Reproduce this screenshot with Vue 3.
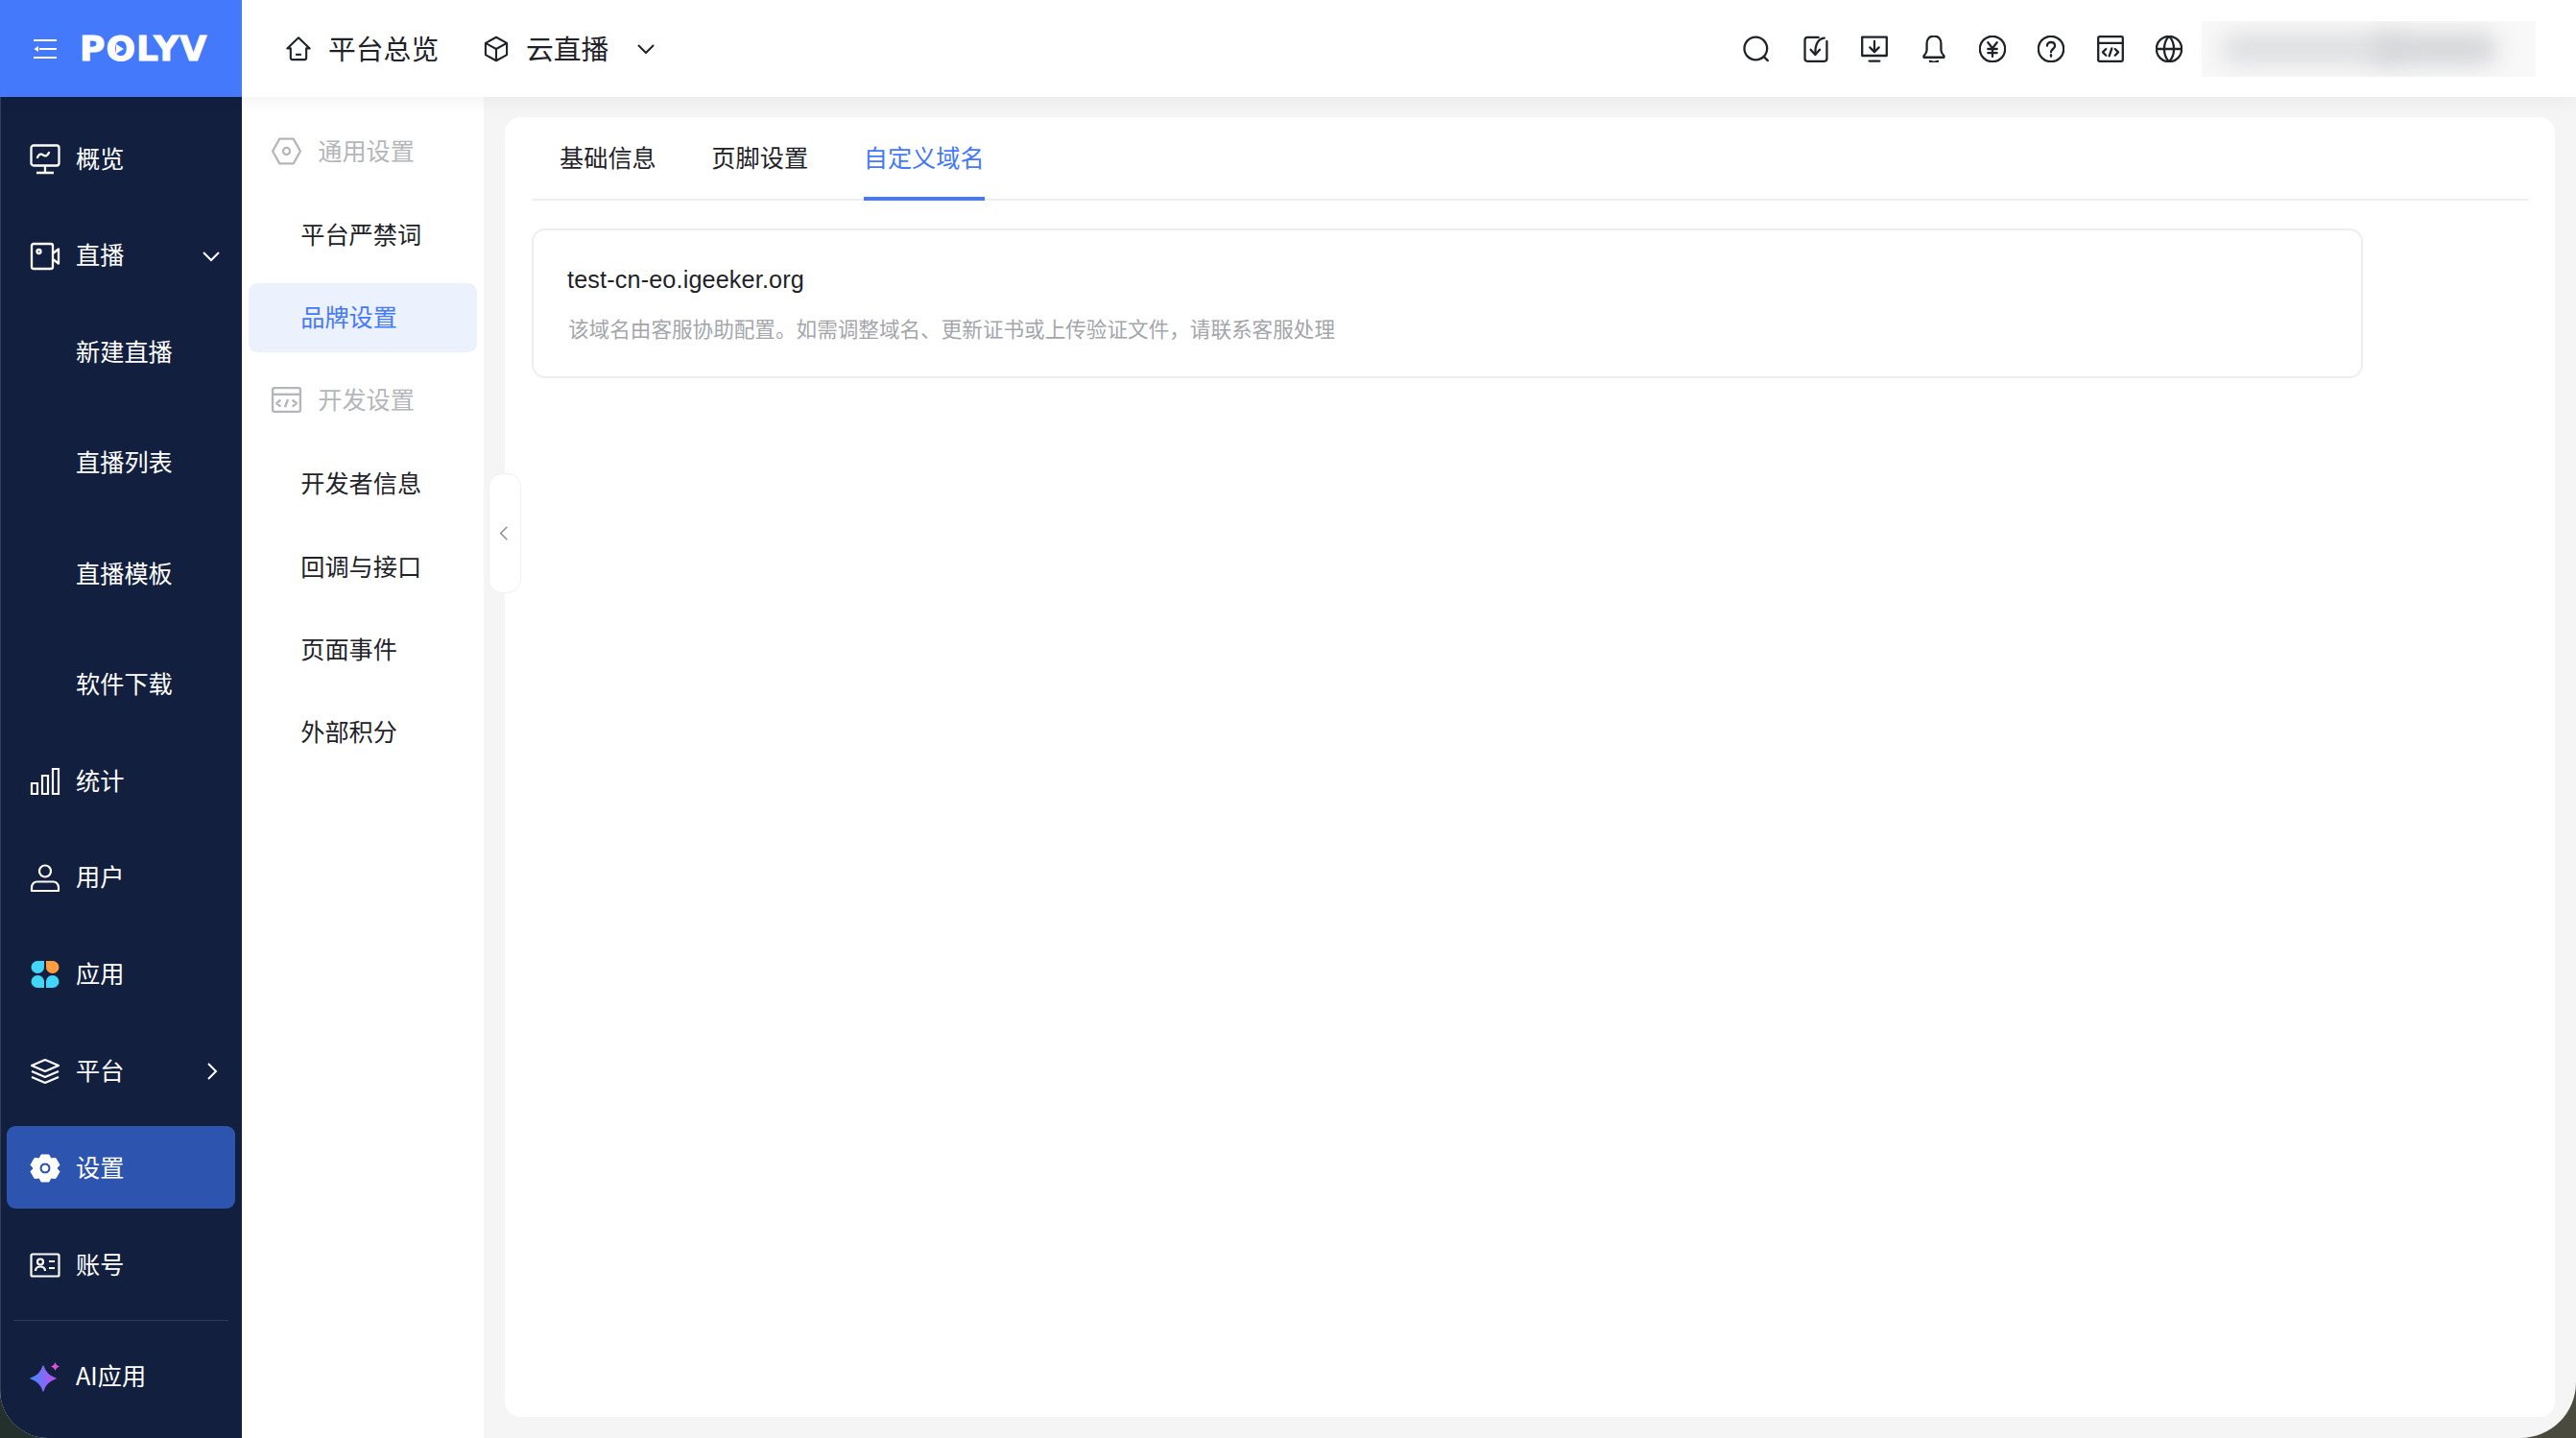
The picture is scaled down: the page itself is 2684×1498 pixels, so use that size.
<script setup>
const topIcons = [
  { k: 'search', d: ['M11.500 2.800a8.800 8.800 0 1 0 0 17.600 8.800 8.800 0 0 0 0-17.600Z', 'M18 18.200 20.800 21'] },
  { k: 'ret', d: ['M14 3H5.500a2 2 0 0 0-2 2v14.500a2 2 0 0 0 2 2h13a2 2 0 0 0 2-2V6', 'M18.500 3.500C14 4 11.500 8 11.500 15.500', 'M8 12.500 11.500 16.500l3.500-4'] },
  { k: 'down', d: ['M2.500 2.800h19v14.400h-19Z', 'M12 6v8', 'M8.500 10.800 12 14.300l3.500-3.500', 'M8 21.300h8'] },
  { k: 'bell', d: ['M12 2c-3.500 0-5.500 2.600-5.500 6v5c0 2-1 3-2.300 4.400v1.100h15.600v-1.100c-1.300-1.400-2.300-2.400-2.300-4.400V8c0-3.400-2-6-5.500-6Z', 'M9 21.500c1.500 1 4.500 1 6 0'] },
  { k: 'yen', d: ['M12 2.200a9.800 9.800 0 1 0 0 19.600 9.800 9.800 0 0 0 0-19.600Z', 'M8.500 7 12 11.500 15.500 7', 'M8.500 12h7', 'M8.500 15h7', 'M12 11.500V18'] },
  { k: 'help', d: ['M12 2.200a9.800 9.800 0 1 0 0 19.600 9.800 9.800 0 0 0 0-19.600Z', 'M9 9.500C9 7.800 10.300 6.800 12 6.800s3 1 3 2.700c0 2.500-3 2.500-3 5', 'M12 16.600v1.200'] },
  { k: 'code', d: ['M3.500 2.500h17a1 1 0 0 1 1 1v17a1 1 0 0 1-1 1h-17a1 1 0 0 1-1-1v-17a1 1 0 0 1 1-1Z', 'M2.500 7.500h19', 'M8.500 12 6 14.500 8.500 17', 'M15.500 12 18 14.500 15.500 17', 'M13 11.500 11 17.500'] },
  { k: 'globe', d: ['M12 2.200a9.800 9.800 0 1 0 0 19.600 9.800 9.800 0 0 0 0-19.600Z', 'M12 2.200c-5 5-5 14.600 0 19.600', 'M12 2.200c5 5 5 14.600 0 19.600', 'M2.200 12h19.600'] },
]
const subNav = [
  { label: '通用设置', group: 'gear' },
  { label: '平台严禁词' },
  { label: '品牌设置', active: true },
  { label: '开发设置', group: 'code' },
  { label: '开发者信息' },
  { label: '回调与接口' },
  { label: '页面事件' },
  { label: '外部积分' },
]
const tabs = [
  { label: '基础信息' },
  { label: '页脚设置' },
  { label: '自定义域名', active: true },
]
const hint = '该域名由客服协助配置。如需调整域名、更新证书或上传验证文件\uFF0C请联系客服处理'
</script>

<template>
  <div class="screen">
    <div class="window">
      <header class="topbar">
        <div class="brand">
          <svg class="burger" viewBox="0 0 24 20" fill="none" stroke="#fff" stroke-width="2">
            <path d="M0 1h24M6 10h18M0 19h24" />
            <path d="M0.500 10 5 7v6Z" fill="#fff" stroke="none" />
          </svg>
          <span class="logo">POLYV<svg class="play" viewBox="0 0 8 10"><path d="M0 0l8 5-8 5Z" fill="#fff" /></svg></span>
        </div>
        <nav class="crumbs">
          <div class="crumb home">
            <svg class="crumb-icon" viewBox="0 0 24 24" fill="none" stroke="#1f2329" stroke-width="1.800" stroke-linejoin="round">
              <path d="M12 2 2 11.500H5v8.500a1.500 1.500 0 0 0 1.500 1.500h11a1.500 1.500 0 0 0 1.500-1.500v-8.500h3Z" />
              <path d="M9.500 17h5" />
            </svg>
            <span>平台总览</span>
          </div>
          <div class="crumb product">
            <svg class="crumb-icon" viewBox="0 0 24 24" fill="none" stroke="#1f2329" stroke-width="1.800" stroke-linejoin="round">
              <path d="M12 1.500 21.500 6.800v10.400L12 22.500 2.500 17.200V6.800Z" />
              <path d="M2.500 6.800 12 12l9.500-5.200M12 12v10.500" />
            </svg>
            <span>云直播</span>
            <svg class="crumb-chevron" viewBox="0 0 20 12" fill="none" stroke="#1f2329" stroke-width="2">
              <path d="M2 2l8 8 8-8" />
            </svg>
          </div>
        </nav>
        <div class="tools">
          <svg v-for="icon in topIcons" :key="icon.k" class="tool" viewBox="1.600 1.600 20.800 20.800" fill="none" stroke="#1f2329" stroke-width="1.700" stroke-linecap="round" stroke-linejoin="round">
            <path v-for="(p, i) in icon.d" :key="i" :d="p" />
          </svg>
          <div class="account">
            <span class="blob blob-a"></span>
            <span class="blob blob-b"></span>
          </div>
        </div>
      </header>

      <div class="body">
        <aside class="sidebar">
          <a class="item">
            <svg class="ico" viewBox="0 0 32 32" fill="none" stroke="#fff" stroke-width="2.300" stroke-linejoin="round">
              <rect x="1.500" y="1.500" width="29" height="21" rx="2.500" /><path d="M16 23v7M7 30h18" /><path d="M8 14c2-4 4-4 6-2.500s4 1.500 6-2.500" stroke-linecap="round" />
            </svg>
            <span>概览</span>
          </a>
          <a class="item">
            <svg class="ico" viewBox="0 0 32 32" fill="none" stroke="#fff" stroke-width="2.300" stroke-linejoin="round">
              <path d="M4 3h18a2 2 0 0 1 2 2v22a2 2 0 0 1-2 2H4a2 2 0 0 1-2-2V5a2 2 0 0 1 2-2Z" />
              <path d="M24 13l6-4.500v15L24 19" /><circle cx="9.500" cy="11" r="2" />
            </svg>
            <span>直播</span>
            <svg class="caret" viewBox="0 0 20 12" fill="none" stroke="#fff" stroke-width="2"><path d="M2 2l8 8 8-8" /></svg>
          </a>
          <div class="sublist">
            <a class="item">新建直播</a>
            <a class="item">直播列表</a>
            <a class="item">直播模板</a>
            <a class="item">软件下载</a>
          </div>
          <a class="item">
            <svg class="ico" viewBox="0 0 32 32" fill="none" stroke="#fff" stroke-width="2.200">
              <path d="M2 18h6v11H2ZM13 10h6v19h-6ZM24 3h6v26h-6Z" />
            </svg>
            <span>统计</span>
          </a>
          <a class="item">
            <svg class="ico" viewBox="0 0 32 32" fill="none" stroke="#fff" stroke-width="2.200" stroke-linejoin="round">
              <circle cx="16" cy="8.500" r="6" /><path d="M2 29v-3.500c0-3.500 2.500-6 5.500-6h17c3 0 5.500 2.500 5.500 6V29Z" />
            </svg>
            <span>用户</span>
          </a>
          <a class="item">
            <svg class="ico" viewBox="0 0 32 32">
              <path d="M8 2h7v6a6.500 6.500 0 0 1-7 7 6.500 6.500 0 0 1 0-13Z" fill="#41d5f7" />
              <path d="M24 2h-7v6a6.500 6.500 0 0 0 7 7 6.500 6.500 0 0 0 0-13Z" fill="#ff9c3d" />
              <path d="M8 30h7v-6a6.500 6.500 0 0 0-7-7 6.500 6.500 0 0 0 0 13Z" fill="#41d5f7" />
              <path d="M24 30h-7v-6a6.500 6.500 0 0 1 7-7 6.500 6.500 0 0 1 0 13Z" fill="#41d5f7" />
            </svg>
            <span>应用</span>
          </a>
          <a class="item">
            <svg class="ico" viewBox="0 0 32 32" fill="none" stroke="#fff" stroke-width="2.200" stroke-linejoin="round">
              <path d="M16 4 30 10 16 16 2 10Z" /><path d="M2 16l14 6 14-6" /><path d="M2 22l14 6 14-6" />
            </svg>
            <span>平台</span>
            <svg class="caret side" viewBox="0 0 12 20" fill="none" stroke="#fff" stroke-width="2"><path d="M2 2l8 8-8 8" /></svg>
          </a>
          <a class="item current">
            <svg class="ico" viewBox="0 0 32 32">
              <path fill="#fff" fill-rule="evenodd" d="M12 2h8l2 4 5-.5 4 7-3 3.500 3 3.500-4 7-5-.5-2 4h-8l-2-4-5 .5-4-7 3-3.500-3-3.500 4-7 5 .5ZM16 10a6 6 0 1 0 0 12 6 6 0 0 0 0-12Zm0 3a3 3 0 1 1 0 6 3 3 0 0 1 0-6Z" stroke="#fff" stroke-width="1" stroke-linejoin="round" />
            </svg>
            <span>设置</span>
          </a>
          <a class="item">
            <svg class="ico" viewBox="0 0 32 32" fill="none" stroke="#fff" stroke-width="2.200" stroke-linejoin="round">
              <rect x="1.500" y="4.500" width="29" height="23" rx="1.500" /><circle cx="11" cy="12.500" r="3" /><path d="M6 22c0-6 10-6 10 0" /><path d="M20 12h6M20 19h6" />
            </svg>
            <span>账号</span>
          </a>
          <div class="rule"></div>
          <a class="item">
            <svg class="ico" viewBox="0 0 32 32">
              <defs>
                <linearGradient id="aiStar" x1="0" y1="0.500" x2="1" y2="0.500">
                  <stop offset="0" stop-color="#3f8cff" /><stop offset="1" stop-color="#c04df0" />
                </linearGradient>
              </defs>
              <path d="M14 5Q17 15 27 18 17 21 14 31 11 21 1 18 11 15 14 5Z" fill="url(#aiStar)" stroke="url(#aiStar)" stroke-width="1.200" stroke-linejoin="round" />
              <path d="M26.500 1Q27.500 4.500 31 5.500 27.500 6.500 26.500 10 25.500 6.500 22 5.500 25.500 4.500 26.500 1Z" fill="#e04fd8" />
            </svg>
            <span class="ai">AI应用</span>
          </a>
        </aside>

        <nav class="subnav">
          <template v-for="row in subNav" :key="row.label">
            <div v-if="row.group" class="group">
              <svg v-if="row.group === 'gear'" class="group-ico" viewBox="0 0 32 32" fill="none" stroke="#b4b6ba" stroke-width="2.200" stroke-linejoin="round">
                <path d="M9 3.500h14l7 12.500-7 12.500H9L2 16Z" /><circle cx="16" cy="16" r="3.500" />
              </svg>
              <svg v-else class="group-ico" viewBox="0 0 32 32" fill="none" stroke="#b4b6ba" stroke-width="2.300" stroke-linejoin="round">
                <rect x="2" y="4" width="28" height="24" rx="2" /><path d="M2 10.500h28" /><path d="M10 16l-4 3.500L10 23M22 16l4 3.500L22 23M17.500 15.500l-3 8" />
              </svg>
              <span>{{ row.label }}</span>
            </div>
            <a v-else class="leaf" :class="{ on: row.active }">{{ row.label }}</a>
          </template>
          <button class="collapse" type="button" aria-label="收起">
            <svg viewBox="0 0 12 20" fill="none" stroke="#8a8d92" stroke-width="1.800"><path d="M10 2 2 10l8 8" /></svg>
          </button>
        </nav>

        <main class="main">
          <section class="panel">
            <div class="tabs">
              <a v-for="t in tabs" :key="t.label" class="tab" :class="{ on: t.active }">{{ t.label }}</a>
            </div>
            <div class="card">
              <div class="domain">test-cn-eo.igeeker.org</div>
              <div class="hint">{{ hint }}</div>
            </div>
          </section>
        </main>
      </div>
    </div>
  </div>
</template>

<style>
html, body { margin: 0; padding: 0; background: #2a332e; }
</style>

<style scoped>
.screen {
  width: 2684px;
  height: 1498px;
  overflow: hidden;
  background: linear-gradient(90deg, #24302c 0, #24302c 50%, #4a4a3e 50%, #4a4a3e 100%);
  font-family: "Noto Sans CJK SC", "Noto Sans", sans-serif;
}
.window {
  width: 100%;
  height: 100%;
  display: flex;
  flex-direction: column;
  background: #f5f5f5;
  border-radius: 0 0 58px 50px;
  overflow: hidden;
}
.topbar {
  position: relative;
  z-index: 3;
  flex: none;
  height: 101px;
  display: flex;
  align-items: center;
  background: #fff;
  box-shadow: 0 4px 18px rgba(0, 0, 0, 0.05);
}
.brand {
  width: 252px;
  height: 100%;
  flex: none;
  display: flex;
  align-items: center;
  gap: 24px;
  padding-left: 35px;
  box-sizing: border-box;
  background: #4479fb;
}
.burger { width: 24px; height: 20px; flex: none; overflow: visible; }
.logo {
  position: relative;
  color: #fff;
  font-family: "DejaVu Sans", sans-serif;
  font-weight: 700;
  font-size: 36px;
  letter-spacing: 1px;
  line-height: 1;
  -webkit-text-stroke: 1px #fff;
}
.play { position: absolute; left: 38px; top: 13px; width: 8px; height: 10px; }
.crumbs { display: flex; align-items: center; padding-left: 45px; }
.crumb {
  display: flex;
  align-items: center;
  font-size: 28.800px;
  color: #1f2329;
  white-space: nowrap;
}
.crumb span { margin-top: -3px; }
.crumb-icon { width: 28px; height: 28px; flex: none; margin-right: 17px; }
.home { width: 206px; }
.crumb-chevron { width: 20px; height: 12px; margin-left: 29px; }
.tools {
  margin-left: auto;
  display: flex;
  align-items: center;
  gap: 33.400px;
  padding-right: 42px;
}
.tool { width: 28px; height: 28px; flex: none; }
.account {
  position: relative;
  width: 348px;
  height: 58px;
  margin-left: -13.500px;
  background: #f8f8f8;
  overflow: hidden;
}
.blob { position: absolute; top: 12px; height: 34px; border-radius: 17px; filter: blur(11px); }
.blob-a { left: 20px; width: 190px; background: #dfe0e2; }
.blob-b { left: 178px; width: 130px; background: #d6d7da; }

.body { flex: 1; min-height: 0; display: flex; }

.sidebar {
  width: 252px;
  flex: none;
  box-sizing: border-box;
  padding-top: 21px;
  display: flex;
  flex-direction: column;
  gap: 14.400px;
  background: #121f3f;
  box-shadow: inset 1px 0 0 rgba(255, 255, 255, 0.14);
}
.item {
  position: relative;
  height: 86.400px;
  flex: none;
  box-sizing: border-box;
  margin: 0 7px;
  padding: 0 0 3px 72px;
  display: flex;
  align-items: center;
  border-radius: 9px;
  color: #fff;
  font-size: 25.200px;
  white-space: nowrap;
}
.current { background: #2d55b0; }
.ico { position: absolute; left: 24px; top: 28px; width: 32px; height: 32px; overflow: visible; }
.caret { position: absolute; right: 15px; top: 38px; width: 20px; height: 12px; }
.caret.side { right: 18px; top: 34px; width: 12px; height: 20px; }
.sublist { display: flex; flex-direction: column; gap: 28.800px; }
.rule { height: 1px; flex: none; margin: 0 14px; background: rgba(255, 255, 255, 0.12); }

.subnav {
  position: relative;
  width: 252px;
  flex: none;
  box-sizing: border-box;
  padding: 21.600px 7.200px 0;
  display: flex;
  flex-direction: column;
  gap: 14.400px;
  background: #fff;
}
.group, .leaf {
  height: 72px;
  flex: none;
  box-sizing: border-box;
  display: flex;
  align-items: center;
  font-size: 25.200px;
  white-space: nowrap;
}
.group { color: #b4b6ba; padding: 0 0 5px 72px; position: relative; }
.group-ico { position: absolute; left: 23px; top: 18px; width: 33px; height: 33px; }
.leaf { color: #1f2329; padding: 0 0 4px 54px; border-radius: 9px; }
.leaf.on { color: #4479fb; background: #ecf1fe; }
.collapse {
  position: absolute;
  z-index: 2;
  left: 257px;
  top: 392px;
  width: 34px;
  height: 125px;
  padding: 0 3px 0 0;
  display: flex;
  align-items: center;
  justify-content: center;
  background: #fff;
  border: 1px solid #f1f1f1;
  border-radius: 14px;
  box-sizing: border-box;
}
.collapse svg { width: 10px; height: 19px; }

.main {
  flex: 1;
  min-width: 0;
  box-sizing: border-box;
  padding: 21px 22px 22px 22px;
}
.panel {
  height: 100%;
  box-sizing: border-box;
  padding: 0 27px 0 28px;
  background: #fff;
  border-radius: 16px;
}
.tabs {
  display: flex;
  gap: 57.600px;
  height: 87px;
  padding-left: 29px;
  border-bottom: 2px solid #eeeeee;
  box-sizing: border-box;
}
.tab {
  height: 87px;
  box-sizing: border-box;
  padding-top: 23px;
  font-size: 25.200px;
  line-height: 37px;
  color: #1f2329;
  white-space: nowrap;
}
.tab.on { color: #4479fb; border-bottom: 4px solid #4479fb; }
.card {
  width: 1908px;
  height: 156px;
  margin-top: 29px;
  box-sizing: border-box;
  padding: 33px 0 0 36px;
  border: 2px solid #eeeeee;
  border-radius: 14px;
}
.domain {
  margin-left: -1px;
  font-family: "Liberation Sans", "Noto Sans CJK SC", sans-serif;
  font-size: 25.200px;
  line-height: 36px;
  letter-spacing: 0.15px;
  color: #1f2329;
}
.hint {
  margin-top: 17px;
  font-size: 21.600px;
  line-height: 32px;
  color: #a3a6ab;
  white-space: nowrap;
}
</style>
